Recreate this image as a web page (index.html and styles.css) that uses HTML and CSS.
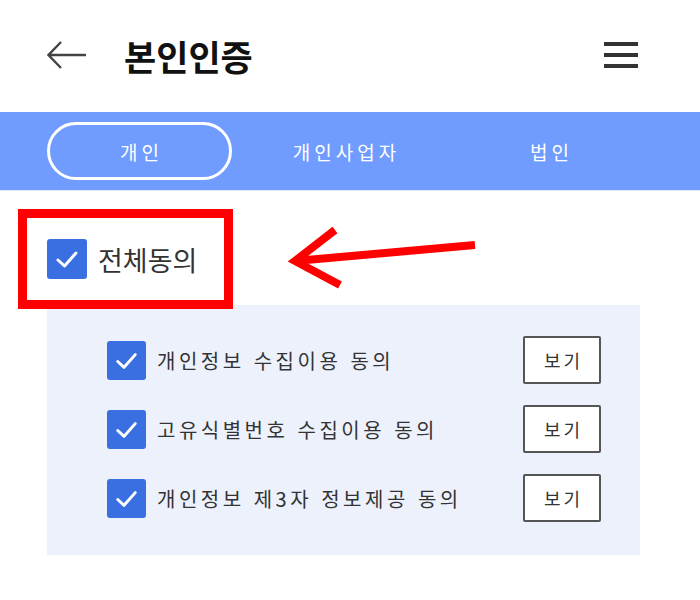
FILE: index.html
```html
<!DOCTYPE html>
<html lang="ko">
<head>
<meta charset="utf-8">
<link rel="stylesheet" href="styles.css">
</head>
<body>
<header class="header">
  <svg class="back" width="40" height="28" viewBox="0 0 40 28"><path d="M39 14H2M14 1L1.5 14L14 27" fill="none" stroke="#444" stroke-width="2.4"/></svg>
  <h1 class="title">본인인증</h1>
  <svg class="menu" width="34" height="26" viewBox="0 0 34 26"><rect x="0" y="0" width="34" height="4" fill="#333"/><rect x="0" y="11" width="34" height="4" fill="#333"/><rect x="0" y="22" width="34" height="4" fill="#333"/></svg>
</header>
<nav class="tabs">
  <div class="tab active">개인</div>
  <div class="tab">개인사업자</div>
  <div class="tab">법인</div>
</nav>
<main class="content">
  <div class="allrow">
    <div class="all">
      <span class="check big"><svg viewBox="0 0 40 40"><path d="M11 21L17.5 27L29 14" fill="none" stroke="#fff" stroke-width="3" stroke-linecap="round" stroke-linejoin="round"/></svg></span>
      <span class="alltext">전체동의</span>
    </div>
    <svg class="pointer" width="200" height="70" viewBox="0 0 200 70"><path d="M190 23L10 39M50 8L10 39L55 63" fill="none" stroke="#ff0000" stroke-width="8"/></svg>
  </div>
  <section class="panel">
    <div class="item">
      <span class="check"><svg viewBox="0 0 40 40"><path d="M11 21L17.5 27L29 14" fill="none" stroke="#fff" stroke-width="3" stroke-linecap="round" stroke-linejoin="round"/></svg></span>
      <span class="label">개인정보 수집이용 동의</span>
      <button class="view">보기</button>
    </div>
    <div class="item">
      <span class="check"><svg viewBox="0 0 40 40"><path d="M11 21L17.5 27L29 14" fill="none" stroke="#fff" stroke-width="3" stroke-linecap="round" stroke-linejoin="round"/></svg></span>
      <span class="label">고유식별번호 수집이용 동의</span>
      <button class="view">보기</button>
    </div>
    <div class="item">
      <span class="check"><svg viewBox="0 0 40 40"><path d="M11 21L17.5 27L29 14" fill="none" stroke="#fff" stroke-width="3" stroke-linecap="round" stroke-linejoin="round"/></svg></span>
      <span class="label">개인정보 제3자 정보제공 동의</span>
      <button class="view">보기</button>
    </div>
  </section>
</main>
</body>
</html>
```
FILE: styles.css
```css
* { box-sizing: border-box; }
body {
  margin: 0;
  background: #fff;
  font-family: "Noto Sans CJK KR", "Noto Sans", sans-serif;
  width: 700px;
}
.header {
  height: 112px;
  display: flex;
  align-items: center;
  padding: 0 62px 2px 47px;
}
.back { display: block; }
.title {
  margin: 0 0 0 37px;
  font-size: 35px;
  font-weight: 700;
  color: #111;
  flex: 1;
}
.menu { display: block; }
.tabs {
  height: 79px;
  background: #6f9cfe;
  border-bottom: 1px solid #dce8fa;
  display: grid;
  grid-template-columns: repeat(3, 185px);
  column-gap: 20px;
  align-items: center;
  padding-left: 47px;
}
.tab {
  height: 58px;
  display: flex;
  align-items: center;
  justify-content: center;
  color: #fff;
  font-size: 19px;
  letter-spacing: 4px;
  padding-left: 4px;
}
.tab.active {
  border: 3px solid #fff;
  border-radius: 29px;
}
.content { padding-top: 18px; }
.allrow {
  display: flex;
  align-items: center;
  margin-left: 18px;
  position: relative;
  z-index: 1;
}
.all {
  display: flex;
  align-items: center;
  gap: 11px;
  width: 215px;
  height: 100px;
  border: 9px solid #ff0000;
  padding-left: 20px;
}
.check {
  width: 39px;
  height: 39px;
  border-radius: 3px;
  background: #3a6fe1;
  display: block;
  flex: none;
}
.check svg { display: block; width: 100%; height: 100%; }
.check.big { width: 40px; height: 40px; }
.alltext {
  font-size: 27px;
  color: #333;
  font-weight: 400;
}
.pointer { display: block; margin-left: 52px; margin-top: -4px; }
.panel {
  margin: -4px 0 0 47px;
  width: 593px;
  background: #ecf1fc;
  padding: 31px 39px 33px 60px;
  display: flex;
  flex-direction: column;
  gap: 21px;
}
.item {
  height: 48px;
  display: flex;
  align-items: center;
}
.label {
  margin-left: 11px;
  font-size: 20px;
  letter-spacing: 3.5px;
  color: #333;
  flex: 1;
}
.view {
  width: 78px;
  height: 48px;
  background: #fff;
  border: 2px solid #555;
  border-radius: 2px;
  font-family: "Noto Sans CJK KR", sans-serif;
  font-size: 18px;
  letter-spacing: 3px;
  padding: 0 0 0 3px;
  color: #333;
}
```
